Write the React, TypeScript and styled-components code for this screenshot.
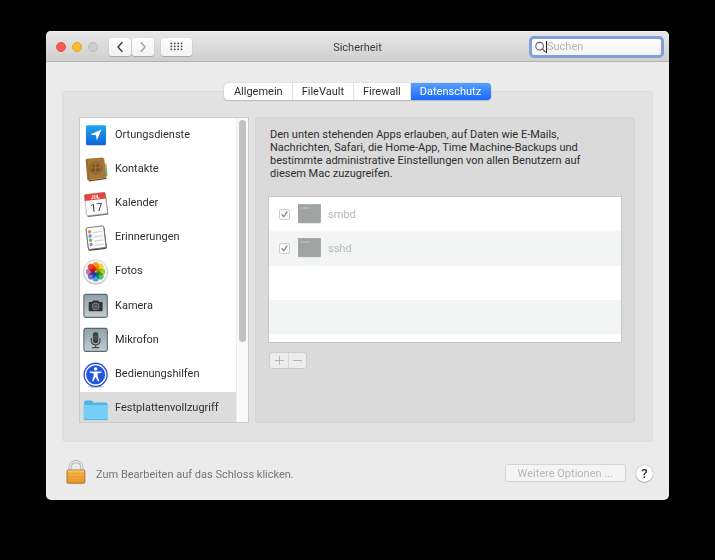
import React, { useState } from "react";
import styled, { createGlobalStyle } from "styled-components";

const GlobalStyle = createGlobalStyle`
  * { box-sizing: border-box; }
  body {
    margin: 0;
    background: #000;
    color: #2e2e2e;
    font-family: Roboto, "Liberation Sans", sans-serif;
    font-size: 11px;
    line-height: 13px;
  }
  button, input { font: inherit; color: inherit; }
  button { padding: 0; margin: 0; }
  svg { display: block; flex: none; }
`;

const Window = styled.main`
  margin: 31px 46px;
  border-radius: 5px;
  overflow: hidden;
  background: #ebebeb;
`;

const TitleBar = styled.header`
  display: grid;
  grid-template-columns: 1fr auto 1fr;
  align-items: center;
  height: 31px;
  padding: 0 5px;
  background: linear-gradient(#e7e7e7, #cfcfcf);
  border-top: 1px solid #f0f0f0;
  border-bottom: 1px solid #b4b4b4;
`;

const TitleLeft = styled.div`
  display: flex;
  align-items: center;
`;

const Lights = styled.div`
  display: flex;
  gap: 6px;
  margin: 0 11px 0 5px;
`;

const Light = styled.button<{ $fill: string; $edge: string }>`
  width: 10px;
  height: 10px;
  border-radius: 50%;
  border: 1px solid ${(p) => p.$edge};
  background: ${(p) => p.$fill};
`;

const NavGroup = styled.div`
  display: flex;
  gap: 1px;
  margin-right: 7px;
`;

const ToolButton = styled.button<{ $width: number }>`
  display: flex;
  align-items: center;
  justify-content: center;
  width: ${(p) => p.$width}px;
  height: 18px;
  border: 0;
  border-radius: 3px;
  background: linear-gradient(#fdfdfd, #f3f3f3);
  box-shadow: 0 0 1px #00000038, 0 1px 1px #00000030;
  color: #404040;
  &:disabled { color: #a4a4a4; }
`;

const Title = styled.h1`
  margin: 0;
  padding-top: 1px;
  font-size: 11px;
  font-weight: 400;
  color: #3c3c3c;
`;

const SearchField = styled.label`
  justify-self: end;
  display: flex;
  align-items: center;
  width: 135px;
  height: 22px;
  padding: 0 3px;
  border: 3px solid #849ddd;
  border-radius: 5px;
  background: linear-gradient(#fdfdfd, #f4f4f4);
  color: #5c5c5c;
`;

const SearchInput = styled.input`
  flex: 1;
  min-width: 0;
  padding: 0;
  border: 0;
  outline: 0;
  background: transparent;
  &::placeholder { color: #b5b5b5; opacity: 1; }
`;

const Caret = styled.span`
  width: 1px;
  height: 12px;
  background: #1c1c1c;
`;

const Body = styled.div`
  padding: 21px 16px 16px;
`;

const Tabs = styled.nav`
  position: relative;
  display: flex;
  width: max-content;
  margin: 0 auto -9px;
  border-radius: 4px;
  background: #fff;
  box-shadow: 0 0 1px #00000060, 0 1px 1px #00000028;
`;

const Tab = styled.button<{ $active: boolean }>`
  height: 17px;
  padding: 0 9px;
  border: 0;
  border-right: 1px solid #e4e4e4;
  background: transparent;
  &:first-child { padding-left: 10px; }
  &:last-child {
    border-right: 0;
    padding-right: 10px;
    border-radius: 0 4px 4px 0;
  }
  ${(p) =>
    p.$active &&
    "color: #fff; background: linear-gradient(#58a0fb, #1768fa);"}
`;

const Panel = styled.section`
  display: grid;
  grid-template-columns: 170px 1fr;
  gap: 6px;
  padding: 25px 17px 18px 16px;
  border: 1px solid #dcdcdc;
  border-radius: 3px;
  background: #e2e2e2;
`;

const ListBox = styled.div`
  display: flex;
  height: 306px;
  overflow: hidden;
  border: 1px solid #cbcbcb;
  background: #fff;
`;

const List = styled.ul`
  flex: 1;
  display: grid;
  grid-template-rows: repeat(9, 1fr);
  height: 308px;
  margin: 0;
  padding: 0;
  list-style: none;
`;

const ListItem = styled.button<{ $active: boolean }>`
  display: flex;
  align-items: center;
  gap: 6px;
  width: 100%;
  height: 100%;
  padding: 0 0 0 3px;
  border: 0;
  text-align: left;
  background: ${(p) => (p.$active ? "#dcdcdc" : "transparent")};
`;

const ItemName = styled.span`
  padding-bottom: 2px;
`;

const ScrollTrack = styled.div`
  width: 12px;
  padding: 2px;
  border-left: 1px solid #ebebeb;
  background: #fafafa;
`;

const ScrollThumb = styled.div`
  width: 7px;
  height: 222px;
  border-radius: 4px;
  background: #c1c1c1;
`;

const Detail = styled.section`
  padding: 10px 12px;
  border: 1px solid #d2d2d2;
  border-radius: 3px;
  background: #dadada;
`;

const Intro = styled.p`
  max-width: 336px;
  margin: 0 0 16px;
  padding-left: 2px;
`;

const TableBox = styled.div`
  height: 147px;
  border: 1px solid #c4c6c6;
  background: #fff;
`;

const AppTable = styled.table`
  width: 100%;
  height: 137px;
  border-collapse: collapse;
  color: #b9b9b9;
`;

const AppRow = styled.tr`
  height: 34px;
  &:nth-child(even) { background: #f3f5f5; }
`;

const Cell = styled.td`
  padding: 0;
`;

const AppLabel = styled.label`
  display: flex;
  align-items: center;
  padding-left: 10px;
`;

const Check = styled.input`
  appearance: none;
  width: 11px;
  height: 11px;
  margin: 1px 8px 0 0;
  border: 1px solid #cdcdcd;
  border-radius: 2px;
  background: #fcfcfc
    url("data:image/svg+xml,%3Csvg xmlns='http://www.w3.org/2000/svg' viewBox='0 0 9 9'%3E%3Cpath d='M2 4.8 3.8 6.8 7 1.8' fill='none' stroke='%23868686' stroke-width='1.3' stroke-linecap='round'/%3E%3C/svg%3E");
`;

const AppName = styled.span`
  margin-left: 7px;
`;

const Segments = styled.div`
  display: flex;
  width: max-content;
  margin: 9px 0 0 1px;
  border: 1px solid #cbcbcb;
  border-radius: 3px;
  background: #ededed;
`;

const Segment = styled.button`
  display: flex;
  align-items: center;
  justify-content: center;
  width: 18px;
  height: 15px;
  border: 0;
  background: transparent;
  color: #b4b4b4;
  & + & { border-left: 1px solid #d8d8d8; }
`;

const Footer = styled.footer`
  display: flex;
  align-items: center;
  gap: 10px;
  padding: 18px 0 0 4px;
`;

const LockButton = styled.button`
  border: 0;
  background: transparent;
`;

const Hint = styled.span`
  flex: 1;
  padding-top: 4px;
  color: #757575;
`;

const Options = styled.button`
  height: 18px;
  margin-top: 2px;
  padding: 0 12px;
  border: 1px solid #d4d4d4;
  border-radius: 3px;
  background: #f4f4f4;
  color: #b8b8b8;
`;

const Help = styled.button`
  width: 17px;
  height: 17px;
  margin-top: 2px;
  border: 0;
  border-radius: 50%;
  background: #fff;
  box-shadow: 0 0 1px #00000070, 0 1px 1px #00000030;
  font-size: 13px;
  font-weight: 500;
`;

const Chevron = ({ d }: { d: string }) => (
  <svg width="8" height="12" viewBox="0 0 8 12" fill="none" stroke="currentColor" strokeWidth="1.5" strokeLinecap="round" strokeLinejoin="round">
    <path d={d} />
  </svg>
);

const GridDots = () => (
  <svg width="13" height="9" viewBox="0 0 13 9" fill="#4a4a4a">
    {[0, 1, 2, 3].flatMap((c) =>
      [0, 1, 2].map((r) => (
        <rect key={`${c}-${r}`} x={0.5 + c * 3.4} y={0.5 + r * 3} width="1.7" height="1.7" rx="0.4" />
      ))
    )}
  </svg>
);

const SearchIcon = () => (
  <svg width="11" height="12" viewBox="0 0 11 12" fill="none" stroke="currentColor" strokeWidth="1.1" strokeLinecap="round">
    <circle cx="4.6" cy="5.2" r="3.8" />
    <path d="M7.4 8 10.4 11" />
  </svg>
);

const Icon = ({ children }: { children: React.ReactNode }) => (
  <svg width="26" height="26" viewBox="0 0 26 26" aria-hidden="true">
    {children}
  </svg>
);

const LocationIcon = () => (
  <Icon>
    <defs>
      <linearGradient id="loc" x2="0" y2="1">
        <stop stopColor="#22a5ef" />
        <stop offset="1" stopColor="#1263d8" />
      </linearGradient>
    </defs>
    <rect x="3" y="3.2" width="20" height="20" rx="1.5" fill="url(#loc)" />
    <path d="M18.4 7.6 13.9 18.6 12.9 13.2 7.4 12.4Z" fill="#fff" />
  </Icon>
);

const ContactsIcon = () => (
  <Icon>
    <path d="M20 5 22.5 6.5 24 22 6 25 4 23Z" fill="#d9d3c5" />
    <path d="M21.6 7.5 23.6 8 24 12 22.2 12Z" fill="#e8a33a" />
    <path d="M22.2 12 24 12 24.3 16 22.6 16Z" fill="#59b3d8" />
    <path d="M22.6 16 24.3 16 24.6 20 23 20Z" fill="#76b84c" />
    <path d="M4 2.8 19.3 1.4Q21 1.4 21.2 3L23.3 21.5 5 24.2Q4.4 24.2 4.3 23.5L2.6 4.4Q2.5 3 4 2.8Z" fill="#a47838" />
    <path d="M5 24.4 23.3 21.7 23.3 23 6.4 25.4Z" fill="#664820" />
    <path d="M4.2 4 5.6 23" stroke="#8a602a" strokeWidth="0.8" />
    <circle cx="12.5" cy="12" r="6.2" fill="#9b7035" stroke="#805a28" strokeWidth="0.7" />
    <circle cx="10.5" cy="9.8" r="1.5" fill="#7b5425" />
    <circle cx="14.5" cy="9.4" r="1.5" fill="#7b5425" />
    <path d="M8.2 15.2Q8.4 12 10.5 11.9 12.1 12 12.2 15.6 10 16.6 8.2 15.2ZM13 15.5Q12.8 11.7 14.7 11.5 16.6 11.8 17 14.4 15.2 16.2 13 15.5Z" fill="#7b5425" />
  </Icon>
);

const CalendarIcon = () => (
  <Icon>
    <g transform="rotate(-7 13 13)">
      <rect x="3" y="3.4" width="21" height="21.6" rx="1.4" fill="#6e6e6e" />
      <rect x="2.4" y="2.4" width="21" height="21.4" rx="1.2" fill="#fbfbfb" stroke="#9c9c9c" strokeWidth="0.6" />
      <path d="M2.4 3.6Q2.4 2.4 3.6 2.4H22.2Q23.4 2.4 23.4 3.6V8.8H2.4Z" fill="#e5463f" />
      <text x="13" y="7.6" textAnchor="middle" fontSize="5" fontWeight="700" fill="#fff">JUL</text>
      <text x="13" y="20.4" textAnchor="middle" fontSize="11" fill="#333">17</text>
    </g>
  </Icon>
);

const RemindersIcon = () => (
  <Icon>
    <g transform="rotate(-7 13 13)">
      <rect x="3.8" y="2.4" width="18.8" height="22.6" rx="1.8" fill="#484848" />
      <rect x="4.2" y="1.8" width="17.8" height="21.8" rx="1.2" fill="#f9f9f9" stroke="#686868" strokeWidth="0.8" />
      {["#ee8b35", "#4a9ee4", "#66bd4c", "#c073d6"].map((fill, i) => (
        <g key={fill}>
          <circle cx="7.4" cy={6 + i * 4.3} r="1.7" fill={fill} />
          <path d={`M10.6 ${7.2 + i * 4.3}H20`} stroke="#b7b7b7" strokeWidth="0.6" />
        </g>
      ))}
    </g>
  </Icon>
);

const PetalGroup = styled.g`
  isolation: isolate;
`;

const Petal = styled.rect`
  mix-blend-mode: multiply;
`;

const PhotosIcon = () => (
  <Icon>
    <circle cx="12.6" cy="13.3" r="12.2" fill="#b0b0b0" />
    <circle cx="12.6" cy="12.8" r="12" fill="#f6f6f6" stroke="#c4c4c4" strokeWidth="0.7" />
    <PetalGroup>
      {["#f89a1c", "#f3d41f", "#a6cf3a", "#4fb877", "#4ba3dd", "#7d74c9", "#c574bb", "#ec4436"].map((fill, i) => (
        <Petal
          key={fill}
          x="9.6"
          y="3"
          width="6.2"
          height="9.2"
          rx="3.1"
          fill={fill}
          transform={`rotate(${i * 45} 12.7 12.8)`}
        />
      ))}
    </PetalGroup>
  </Icon>
);

const Tile = () => (
  <>
    <defs>
      <linearGradient id="tile" x2="0" y2="1">
        <stop stopColor="#8fa0ab" />
        <stop offset="1" stopColor="#c3cdd0" />
      </linearGradient>
    </defs>
    <rect x="0.9" y="1.4" width="23.4" height="23" rx="1.8" fill="url(#tile)" stroke="#5d686e" strokeWidth="1.1" />
  </>
);

const CameraIcon = () => (
  <Icon>
    <Tile />
    <path d="M6.2 9H9L10.2 7.4H15.2L16.4 9H19Q19.6 9 19.6 9.6V17.6Q19.6 18.3 19 18.3H6.3Q5.7 18.3 5.7 17.6V9.6Q5.7 9 6.2 9Z" fill="#303436" />
    <circle cx="12.7" cy="13.5" r="3.4" fill="#3f4548" stroke="#949ea2" strokeWidth="0.8" />
    <circle cx="12.7" cy="13.5" r="1.8" fill="#606a6f" />
  </Icon>
);

const MicIcon = () => (
  <Icon>
    <Tile />
    <path d="M8.3 11V13.6Q8.5 17.6 12.6 17.8 16.8 17.6 17 13.6V11M12.6 18V20.4M9 20.6H16.2" fill="none" stroke="#454b4e" strokeWidth="1.2" />
    <rect x="9.9" y="5" width="5.4" height="11.2" rx="2.7" fill="#3c4144" />
    <path d="M10 9.3H15.2M10 11.2H15.2" stroke="#6d7579" strokeWidth="0.5" />
  </Icon>
);

const AccessIcon = () => (
  <Icon>
    <ellipse cx="12.6" cy="24.6" rx="8" ry="1.3" fill="#c6c6c6" />
    <circle cx="12.6" cy="12.8" r="12.2" fill="#2a4fcb" />
    <circle cx="12.6" cy="12.8" r="10.2" fill="#2456e6" stroke="#fff" strokeWidth="1.3" />
    <circle cx="12.6" cy="6.9" r="1.7" fill="#fff" />
    <path d="M6.7 9.4 11.5 9.6H13.7L18.5 9.4V10.7L14.5 11.4 14.7 14.5 16.2 19 15 19.5 12.6 15 10.2 19.5 9 19 10.5 14.5 10.7 11.4 6.7 10.7Z" fill="#fff" />
  </Icon>
);

const FolderIcon = () => (
  <Icon>
    <path d="M1 6.5Q1 4.6 2.5 4.6H8.4Q9.2 4.6 9.8 5.5L10.6 6.6H22.8Q24.6 6.6 24.6 8.3V12H1Z" fill="#53b4e2" />
    <path d="M0.6 9H24.9V22.4Q24.9 24 23.3 24H2.2Q0.6 24 0.6 22.4Z" fill="#75cff8" />
    <path d="M1 23.6H24.5" stroke="#52aedb" strokeWidth="0.9" />
  </Icon>
);

const TerminalIcon = () => (
  <svg width="23" height="20" viewBox="0 0 23 20" aria-hidden="true">
    <rect x="0.6" y="1.8" width="22" height="18" rx="0.6" fill="#dfe0e0" />
    <rect x="0.4" y="0.6" width="22" height="18" fill="#a1a3a3" stroke="#94a09e" strokeWidth="0.7" />
    <path d="M3 4H12" stroke="#a2d3a8" strokeWidth="1.3" strokeDasharray="1.8 0.5" />
  </svg>
);

const LockIcon = () => (
  <svg width="20" height="24" viewBox="0 0 20 24" aria-hidden="true">
    <defs>
      <linearGradient id="brass" x2="0" y2="1">
        <stop stopColor="#fbb64a" />
        <stop offset="1" stopColor="#e8962a" />
      </linearGradient>
    </defs>
    <path d="M4 11V7.3Q4.2 1.8 9.9 1.6 15.7 1.8 15.9 7.3V11" fill="none" stroke="#8d9aa2" strokeWidth="2.8" />
    <path d="M4 11V7.3Q4.2 1.8 9.9 1.6 15.7 1.8 15.9 7.3V11" fill="none" stroke="#dce5ea" strokeWidth="1.7" />
    <rect x="1" y="10" width="17.8" height="13.2" rx="1" fill="url(#brass)" stroke="#9b6b28" strokeWidth="0.9" />
    <path d="M1.8 13.5H18M1.8 16.5H18M1.8 19.5H18" stroke="#df982f" strokeWidth="0.5" />
    <path d="M1.8 11H18" stroke="#ffd58c" strokeWidth="0.8" />
  </svg>
);

const tabs = ["Allgemein", "FileVault", "Firewall", "Datenschutz"];

const services = [
  { name: "Ortungsdienste", Glyph: LocationIcon },
  { name: "Kontakte", Glyph: ContactsIcon },
  { name: "Kalender", Glyph: CalendarIcon },
  { name: "Erinnerungen", Glyph: RemindersIcon },
  { name: "Fotos", Glyph: PhotosIcon },
  { name: "Kamera", Glyph: CameraIcon },
  { name: "Mikrofon", Glyph: MicIcon },
  { name: "Bedienungshilfen", Glyph: AccessIcon },
  { name: "Festplattenvollzugriff", Glyph: FolderIcon },
];

const rows = ["smbd", "sshd", "", ""];

export default function App() {
  const [tab, setTab] = useState("Datenschutz");
  const [service, setService] = useState("Festplattenvollzugriff");

  return (
    <>
      <GlobalStyle />
      <Window>
        <TitleBar>
          <TitleLeft>
            <Lights>
              <Light $fill="#fc5b56" $edge="#e2504a" aria-label="Schließen" />
              <Light $fill="#fdbb30" $edge="#e2a42b" aria-label="Minimieren" />
              <Light $fill="#cecece" $edge="#bcbcbc" aria-label="Zoomen" disabled />
            </Lights>
            <NavGroup>
              <ToolButton $width={22} aria-label="Zurück">
                <Chevron d="M6 1.6 2 6 6 10.4" />
              </ToolButton>
              <ToolButton $width={22} aria-label="Vorwärts" disabled>
                <Chevron d="M2 1.6 6 6 2 10.4" />
              </ToolButton>
            </NavGroup>
            <ToolButton $width={31} aria-label="Alle einblenden">
              <GridDots />
            </ToolButton>
          </TitleLeft>
          <Title>Sicherheit</Title>
          <SearchField>
            <SearchIcon />
            <Caret />
            <SearchInput type="text" placeholder="Suchen" aria-label="Suchen" />
          </SearchField>
        </TitleBar>

        <Body>
          <Tabs>
            {tabs.map((name) => (
              <Tab key={name} $active={name === tab} onClick={() => setTab(name)}>
                {name}
              </Tab>
            ))}
          </Tabs>

          <Panel>
            <ListBox>
              <List>
                {services.map(({ name, Glyph }) => (
                  <li key={name}>
                    <ListItem $active={name === service} onClick={() => setService(name)}>
                      <Glyph />
                      <ItemName>{name}</ItemName>
                    </ListItem>
                  </li>
                ))}
              </List>
              <ScrollTrack>
                <ScrollThumb />
              </ScrollTrack>
            </ListBox>

            <Detail>
              <Intro>
                Den unten stehenden Apps erlauben, auf Daten wie E-Mails, Nachrichten, Safari, die
                Home-App, Time Machine-Backups und bestimmte administrative Einstellungen von allen
                Benutzern auf diesem Mac zuzugreifen.
              </Intro>
              <TableBox>
                <AppTable>
                  <tbody>
                    {rows.map((name, i) => (
                      <AppRow key={i}>
                        <Cell>
                          {name && (
                            <AppLabel>
                              <Check type="checkbox" defaultChecked disabled />
                              <TerminalIcon />
                              <AppName>{name}</AppName>
                            </AppLabel>
                          )}
                        </Cell>
                      </AppRow>
                    ))}
                  </tbody>
                </AppTable>
              </TableBox>
              <Segments>
                <Segment disabled aria-label="Hinzufügen">
                  <svg width="9" height="9" viewBox="0 0 9 9" stroke="currentColor">
                    <path d="M0 4.5H9M4.5 0V9" />
                  </svg>
                </Segment>
                <Segment disabled aria-label="Entfernen">
                  <svg width="9" height="9" viewBox="0 0 9 9" stroke="currentColor">
                    <path d="M0 4.5H9" />
                  </svg>
                </Segment>
              </Segments>
            </Detail>
          </Panel>

          <Footer>
            <LockButton aria-label="Schloss">
              <LockIcon />
            </LockButton>
            <Hint>Zum Bearbeiten auf das Schloss klicken.</Hint>
            <Options disabled>Weitere Optionen ...</Options>
            <Help aria-label="Hilfe">?</Help>
          </Footer>
        </Body>
      </Window>
    </>
  );
}
